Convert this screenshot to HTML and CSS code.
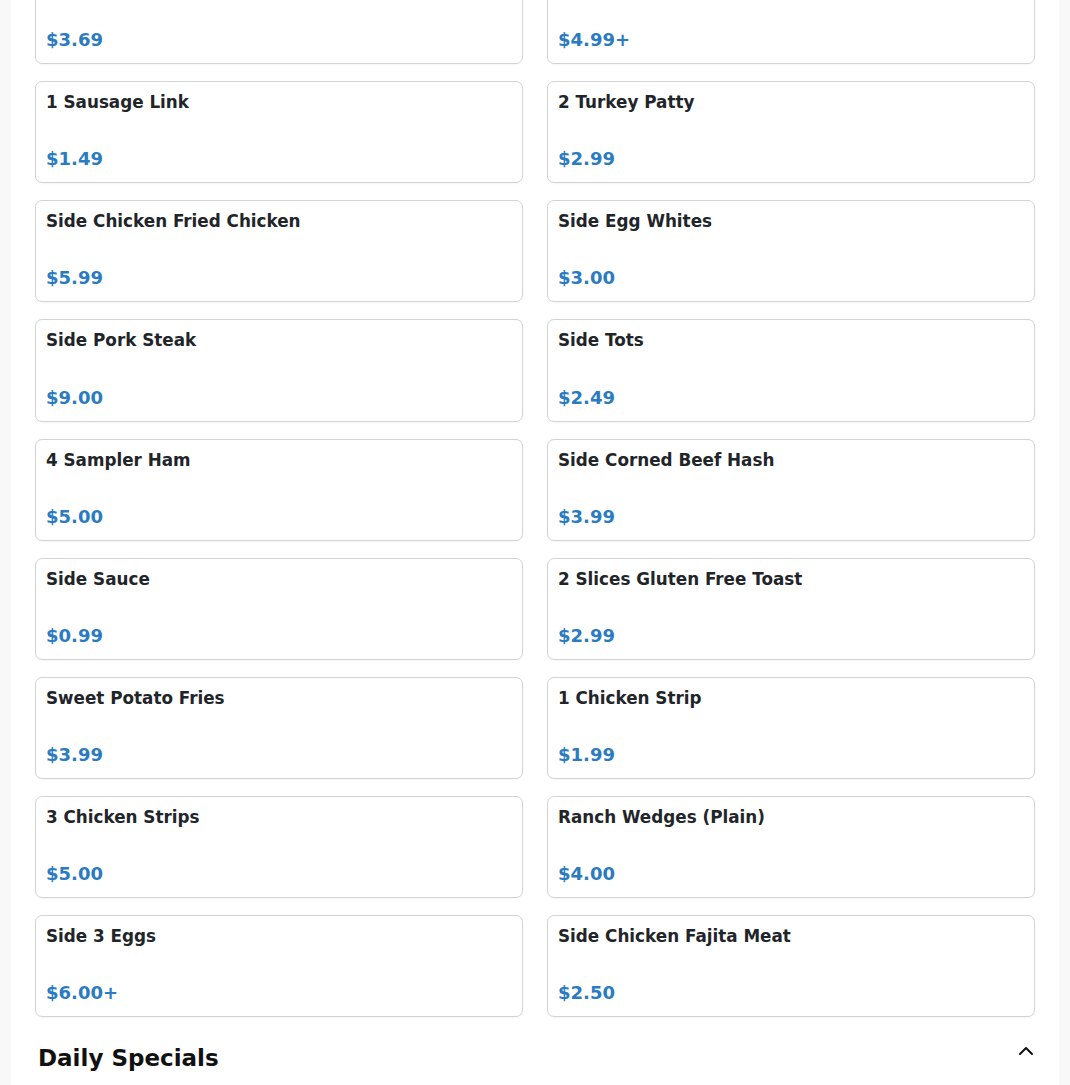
FILE: index.html
```html
<!DOCTYPE html>
<html lang="en">
<head>
<meta charset="utf-8">
<title>Menu - Sides</title>
<link rel="stylesheet" href="styles.css">
</head>
<body>
<main class="panel">
  <section class="grid">
    <div class="card"><div class="name">Side Bacon</div><div class="price">$3.69</div></div>
    <div class="card"><div class="name">Side Hashbrowns</div><div class="price">$4.99+</div></div>
    <div class="card"><div class="name">1 Sausage Link</div><div class="price">$1.49</div></div>
    <div class="card"><div class="name">2 Turkey Patty</div><div class="price">$2.99</div></div>
    <div class="card"><div class="name">Side Chicken Fried Chicken</div><div class="price">$5.99</div></div>
    <div class="card"><div class="name">Side Egg Whites</div><div class="price">$3.00</div></div>
    <div class="card"><div class="name">Side Pork Steak</div><div class="price">$9.00</div></div>
    <div class="card"><div class="name">Side Tots</div><div class="price">$2.49</div></div>
    <div class="card"><div class="name">4 Sampler Ham</div><div class="price">$5.00</div></div>
    <div class="card"><div class="name">Side Corned Beef Hash</div><div class="price">$3.99</div></div>
    <div class="card"><div class="name">Side Sauce</div><div class="price">$0.99</div></div>
    <div class="card"><div class="name">2 Slices Gluten Free Toast</div><div class="price">$2.99</div></div>
    <div class="card"><div class="name">Sweet Potato Fries</div><div class="price">$3.99</div></div>
    <div class="card"><div class="name">1 Chicken Strip</div><div class="price">$1.99</div></div>
    <div class="card"><div class="name">3 Chicken Strips</div><div class="price">$5.00</div></div>
    <div class="card"><div class="name">Ranch Wedges (Plain)</div><div class="price">$4.00</div></div>
    <div class="card"><div class="name">Side 3 Eggs</div><div class="price">$6.00+</div></div>
    <div class="card"><div class="name">Side Chicken Fajita Meat</div><div class="price">$2.50</div></div>
  </section>
  <header class="section-head">
    <h2 class="section-title">Daily Specials</h2>
    <svg class="chevron" width="16" height="16" viewBox="0 0 16 16" aria-hidden="true">
      <path d="M2 11 L8 5 L14 11" fill="none" stroke="#111" stroke-width="2" stroke-linecap="round" stroke-linejoin="round"/>
    </svg>
  </header>
</main>
</body>
</html>
```

FILE: styles.css
```css
html, body {
  margin: 0;
  padding: 0;
  background: #f8f8f8;
  font-family: "DejaVu Sans", "Liberation Sans", sans-serif;
  color: #212529;
}

.panel {
  margin: 0 11px;
  padding: 0 24px 40px;
  background: #ffffff;
  min-height: 1085px;
  box-sizing: border-box;
  overflow: hidden;
}

.grid {
  display: grid;
  grid-template-columns: 1fr 1fr;
  column-gap: 24px;
  row-gap: 17px;
  margin-top: -38px;
}

.card {
  border: 1px solid #d3d3d3;
  border-radius: 7px;
  padding: 10px 10px 12px;
  height: 102.15px;
  box-sizing: border-box;
  display: flex;
  flex-direction: column;
  justify-content: space-between;
  box-shadow: 0 1px 2px rgba(0, 0, 0, 0.04);
}

.name {
  font-size: 16.8px;
  font-weight: bold;
  line-height: 20px;
  color: #212529;
}

.price {
  font-size: 18px;
  font-weight: bold;
  line-height: 22px;
  color: #2b7bc2;
}

.section-head {
  display: flex;
  align-items: center;
  justify-content: space-between;
  padding: 26px 1px 0 3px;
}

.section-title {
  margin: 0;
  font-size: 23px;
  font-weight: bold;
  line-height: 30px;
  color: #111;
}

.chevron {
  margin-top: -15px;
}
```
